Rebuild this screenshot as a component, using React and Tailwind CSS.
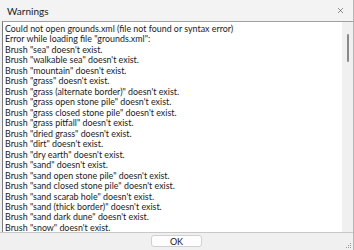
import { X } from 'lucide-react';

const lines = [
  'Could not open grounds.xml (file not found or syntax error)',
  'Error while loading file "grounds.xml":',
  'Brush "sea" doesn\'t exist.',
  'Brush "walkable sea" doesn\'t exist.',
  'Brush "mountain" doesn\'t exist.',
  'Brush "grass" doesn\'t exist.',
  'Brush "grass (alternate border)" doesn\'t exist.',
  'Brush "grass open stone pile" doesn\'t exist.',
  'Brush "grass closed stone pile" doesn\'t exist.',
  'Brush "grass pitfall" doesn\'t exist.',
  'Brush "dried grass" doesn\'t exist.',
  'Brush "dirt" doesn\'t exist.',
  'Brush "dry earth" doesn\'t exist.',
  'Brush "sand" doesn\'t exist.',
  'Brush "sand open stone pile" doesn\'t exist.',
  'Brush "sand closed stone pile" doesn\'t exist.',
  'Brush "sand scarab hole" doesn\'t exist.',
  'Brush "sand (thick border)" doesn\'t exist.',
  'Brush "sand dark dune" doesn\'t exist.',
  'Brush "snow" doesn\'t exist.',
];

export default function App() {
  return (
    <div className="w-[354px] h-[250px] flex flex-col bg-[#f0f0f0] border-r border-[#b5b5b5] text-[#1a1a1a] font-['Lato',sans-serif] overflow-hidden">
      {/* Title bar */}
      <div className="h-[21px] shrink-0 flex items-center justify-between bg-[#f3f3f3] pl-[7px] pr-[8px]">
        <span className="text-[10px] leading-none">Warnings</span>
        <X className="w-[9px] h-[9px] text-[#333]" strokeWidth={1.4} />
      </div>

      {/* Text box */}
      <div className="h-[211px] shrink-0 ml-[2px] flex border-t border-l border-[#7a7a7a] border-t-[#a0a0a0] bg-white overflow-hidden">
        <div className="flex-1 pl-[2px] pt-[2px] overflow-hidden">
          {lines.map((l) => (
            <div key={l} className="text-[8.9px] leading-[10.47px] whitespace-nowrap">{l}</div>
          ))}
        </div>
        <div className="w-[11px] shrink-0 bg-[#f0f0f0] flex justify-center pt-[12px]">
          <div className="w-[2px] h-[28px] rounded-full bg-[#8a8a8a]" />
        </div>
      </div>

      {/* Footer */}
      <div className="flex-1 relative flex items-start justify-center pt-[2px] border-t border-[#c8c8c8]">
        <button className="w-[51px] h-[12px] bg-[#fdfdfd] border border-[#d0d0d0] rounded-[3px] text-[9px] leading-none flex items-center justify-center">OK</button>
        <div className="absolute right-[2px] bottom-[2px] grid grid-cols-3 gap-[1px]">
          <span />
          <span />
          <span className="w-[1px] h-[1px] bg-[#9a9a9a]" />
          <span />
          <span className="w-[1px] h-[1px] bg-[#9a9a9a]" />
          <span className="w-[1px] h-[1px] bg-[#9a9a9a]" />
          <span className="w-[1px] h-[1px] bg-[#9a9a9a]" />
          <span className="w-[1px] h-[1px] bg-[#9a9a9a]" />
          <span className="w-[1px] h-[1px] bg-[#9a9a9a]" />
        </div>
      </div>
    </div>
  );
}
